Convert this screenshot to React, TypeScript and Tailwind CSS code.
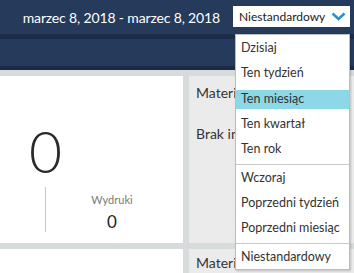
import React from 'react';

const groups: string[][] = [
  ['Dzisiaj', 'Ten tydzień', 'Ten miesiąc', 'Ten kwartał', 'Ten rok'],
  ['Wczoraj', 'Poprzedni tydzień', 'Poprzedni miesiąc'],
  ['Niestandardowy'],
];

const App = () => {
  return (
    <div
      className="relative w-[354px] h-[273px] overflow-hidden bg-[#d8dbdc]"
      style={{ fontFamily: 'Lato, "Open Sans", sans-serif' }}
    >
      {/* top bar */}
      <div className="h-[34px] bg-[#263b5c] flex items-center justify-end pr-[4px]">
        <span className="text-white text-[14px] tracking-[-0.15px] mr-[13px]">
          marzec 8, 2018 - marzec 8, 2018
        </span>
        <div className="w-[117px] h-[21px] bg-white flex items-center justify-between pl-[6px] pr-[4px] mt-[-1px]">
          <span className="text-[12px] text-[#222]">Niestandardowy</span>
          <svg width="15" height="9" viewBox="0 0 15 9">
            <path d="M1.5 1.5 L7.5 7 L13.5 1.5" fill="none" stroke="#2d8fd6" strokeWidth="2.6" />
          </svg>
        </div>
      </div>
      <div className="h-[5px] bg-[#1b2c47]" />
      <div className="h-[27px] bg-[#263b5c]" />
      <div className="h-[4px] bg-[#1b2c47]" />

      {/* content */}
      <div className="pt-[6px] flex flex-col gap-[6px]">
        <div className="flex gap-[6px] h-[167px]">
          <div className="w-[183px] bg-white flex flex-col">
            <div className="h-[102px] flex items-end">
              <span className="w-[91px] text-center text-[57px] font-light leading-none text-[#2b2b2b] mb-[-2px]">
                0
              </span>
            </div>
            <div className="flex mt-[9px]">
              <div className="w-[91px] flex justify-center">
                <div className="w-px h-[45px] bg-[#b8c9dc]" />
              </div>
              <div className="w-[42px] flex flex-col items-center pt-[7px]">
                <span className="text-[11px] text-[#7a7a7a] leading-none">Wydruki</span>
                <span className="text-[17px] text-[#222] leading-none mt-[8px]">0</span>
              </div>
            </div>
          </div>
          <div className="flex-1 bg-[#ebebeb] pl-[7px] pt-[10px] text-[14px] text-[#333]">
            <div className="leading-none">Materiały</div>
            <div className="leading-none mt-[27px]">Brak informacji</div>
          </div>
        </div>
        <div className="flex gap-[6px] h-[40px]">
          <div className="w-[183px] bg-white" />
          <div className="flex-1 bg-[#ebebeb] pl-[7px] pt-[7px] text-[14px] text-[#333]">
            <div className="leading-none">Materiały</div>
          </div>
        </div>
      </div>

      {/* dropdown list */}
      <div className="absolute left-[235px] top-[34px] w-[115px] bg-white border border-[#bdbdbd] shadow-[1px_1px_2px_rgba(0,0,0,0.2)] pb-[2px]">
        {groups.map((g, gi) => (
          <div
            key={gi}
            className={
              'flex flex-col gap-[6.3px] ' +
              (gi === 0 ? 'pt-[4px] pb-[5px]' : 'border-t border-[#c8c8c8] pt-[3.5px]') +
              (gi === 1 ? ' pb-[5px]' : '')
            }
          >
            {g.map((it) => (
              <div
                key={it}
                className={
                  'h-[19px] flex items-center pl-[5px] text-[12.5px] text-[#333] ' +
                  (it === 'Ten miesiąc' ? 'bg-[#8cd8e6]' : '')
                }
              >
                {it}
              </div>
            ))}
          </div>
        ))}
      </div>
    </div>
  );
};

export default App;
